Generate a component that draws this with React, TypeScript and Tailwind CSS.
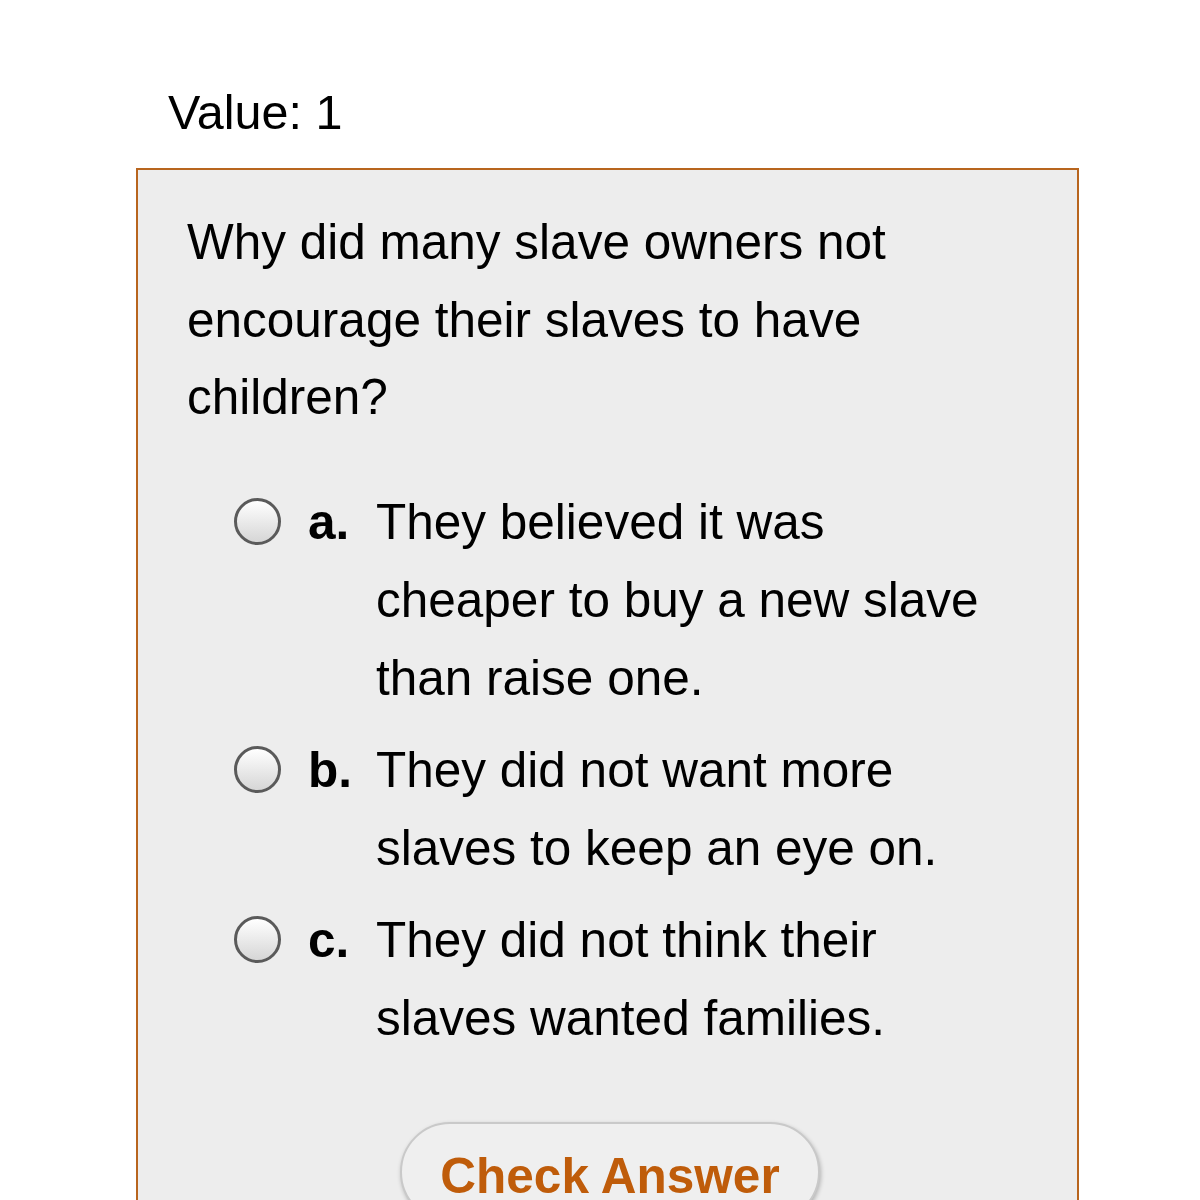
import React from 'react';

interface Choice {
  letter: string;
  text: string;
}

const choices: Choice[] = [
  { letter: 'a.', text: 'They believed it was cheaper to buy a new slave than raise one.' },
  { letter: 'b.', text: 'They did not want more slaves to keep an eye on.' },
  { letter: 'c.', text: 'They did not think their slaves wanted families.' },
];

const Radio: React.FC = () => (
  <span className="mt-[15px] block h-[47px] w-[47px] shrink-0 rounded-full border-[3px] border-[#5a5a5a] bg-gradient-to-b from-white to-[#d6d6d6]" />
);

export default function App() {
  return (
    <div className="min-h-[1200px] overflow-hidden bg-white font-['Liberation_Sans',Arial,sans-serif] text-black">
      <div className="pl-[168px] pt-[82px] text-[48.5px] leading-[60px]">Value: 1</div>

      <div className="ml-[136px] mt-[26px] h-[1100px] w-[943px] border-2 border-[#b8651e] bg-[#ededed] pl-[49px] pt-[33px]">
        <p className="w-[760px] text-[49.5px] leading-[77.5px]">
          Why did many slave owners not encourage their slaves to have children?
        </p>

        <div className="mt-[47px] flex flex-col gap-[14px] pl-[47px]">
          {choices.map((c) => (
            <div key={c.letter} className="flex items-start">
              <Radio />
              <span className="ml-[27px] w-[68px] shrink-0 text-[49.5px] font-bold leading-[78px]">{c.letter}</span>
              <span className="w-[630px] text-[49.5px] leading-[78px]">{c.text}</span>
            </div>
          ))}
        </div>

        <div className="mt-[65px] pl-[213px]">
          <button className="h-[100px] w-[420px] rounded-full border-2 border-[#c9c9c9] bg-[#efefef] pb-[6px] pt-[15px] text-[49.5px] font-bold leading-[60px] text-[#bf5c0a] shadow-[1px_2px_4px_rgba(0,0,0,0.25)]">
            Check Answer
          </button>
        </div>
      </div>
    </div>
  );
}
